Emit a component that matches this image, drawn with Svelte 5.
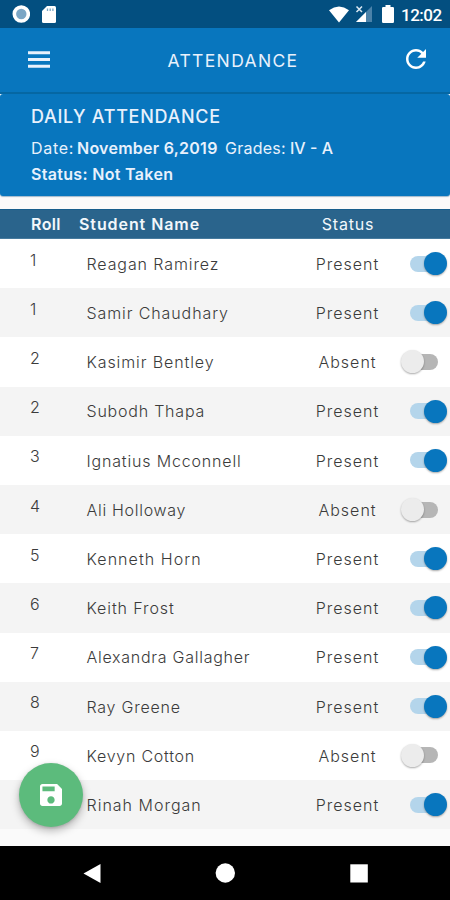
<script>
  const students = [
    { roll: 1, name: 'Reagan Ramirez', present: true, track: 0.9 },
    { roll: 1, name: 'Samir Chaudhary', present: true, track: 0.9 },
    { roll: 2, name: 'Kasimir Bentley', present: false, track: 0.9 },
    { roll: 2, name: 'Subodh Thapa', present: true, track: 0.78 },
    { roll: 3, name: 'Ignatius Mcconnell', present: true, track: 0.83 },
    { roll: 4, name: 'Ali Holloway', present: false, track: 0.7 },
    { roll: 5, name: 'Kenneth Horn', present: true, track: 1.07 },
    { roll: 6, name: 'Keith Frost', present: true, track: 0.9 },
    { roll: 7, name: 'Alexandra Gallagher', present: true, track: 0.73 },
    { roll: 8, name: 'Ray Greene', present: true, track: 0.76 },
    { roll: 9, name: 'Kevyn Cotton', present: false, track: 0.75 },
    { roll: 10, name: 'Rinah Morgan', present: true, track: 1 }
  ];
</script>

<div class="screen">
  <div class="statusbar">
    <svg class="ring" width="18" height="18" viewBox="0 0 18 18">
      <circle cx="9.300" cy="9" r="7" fill="#7ba6c5" stroke="#fff" stroke-width="3.600" />
    </svg>
    <svg class="sd" width="14" height="17" viewBox="0 0 14 17">
      <path d="M5 0H12.500Q14 0 14 1.500V15.500Q14 17 12.500 17H1.500Q0 17 0 15.500V5Z" fill="#fff" />
      <path d="M5.500 2.500V5M8.200 2.500V5M10.900 2.500V5" stroke="#7ba6c5" stroke-width="1.300" />
    </svg>
    <div class="spacer"></div>
    <svg width="20" height="17" viewBox="0 0 20 17">
      <path d="M0 4.200Q10-3.200 20 4.200L10 16.500Z" fill="#fff" />
    </svg>
    <svg class="signal" width="18" height="18" viewBox="0 0 18 18">
      <path d="M17 1V17H1Z" fill="#4b82a9" />
      <path d="M11 7V17H1Z" fill="#fff" />
      <path d="M1.500 1.500L7 7M7 1.500L1.500 7" stroke="#dce9f2" stroke-width="1.500" />
    </svg>
    <svg class="battery" width="12" height="18" viewBox="0 0 12 18">
      <path d="M3.500 0H8.500V2H10.800Q12 2 12 3.200V16.800Q12 18 10.800 18H1.200Q0 18 0 16.800V3.200Q0 2 1.200 2H3.500Z" fill="#fff" />
    </svg>
    <span class="clock">12:02</span>
  </div>

  <header class="appbar">
    <svg width="22" height="17" viewBox="0 0 22 17">
      <path d="M0 1.700H22M0 8.500H22M0 15.300H22" stroke="#e8f1fc" stroke-width="3" />
    </svg>
    <h1>ATTENDANCE</h1>
    <svg width="20" height="20" viewBox="4 4 16 16">
      <path fill="#fff" d="M17.650 6.350C16.200 4.900 14.210 4 12 4c-4.420 0-7.990 3.580-7.990 8s3.570 8 7.990 8c3.730 0 6.840-2.550 7.730-6h-2.080c-.82 2.330-3.040 4-5.650 4-3.310 0-6-2.690-6-6s2.690-6 6-6c1.660 0 3.140.69 4.220 1.780L13 11h7V4l-2.350 2.350z" />
    </svg>
  </header>

  <section class="summary">
    <h2>DAILY ATTENDANCE</h2>
    <p><span class="date-label">Date:</span><b class="date">November 6,2019</b><span class="grades">Grades:</span><b class="grade">IV - A</b></p>
    <p class="state"><b>Status: Not Taken</b></p>
  </section>

  <div class="table">
    <div class="thead">
      <span class="h-roll">Roll</span><span class="h-name">Student Name</span><span class="h-status">Status</span>
    </div>
    {#each students as s}
      <div class="row">
        <span class="roll">{s.roll}</span>
        <span class="name" style="letter-spacing: {s.track}px">{s.name}</span>
        <span class="status">{s.present ? 'Present' : 'Absent'}</span>
        <span class="toggle" class:on={s.present}><i></i></span>
      </div>
    {/each}
  </div>

  <button class="fab" aria-label="Save">
    <svg width="22" height="22" viewBox="3 3 18 18">
      <path fill="#fff" d="M17 3H5c-1.110 0-2 .9-2 2v14c0 1.100.89 2 2 2h14c1.100 0 2-.9 2-2V7l-4-4zm-5 16c-1.660 0-3-1.340-3-3s1.340-3 3-3 3 1.340 3 3-1.340 3-3 3zm3-10H5V5h10v4z" />
    </svg>
  </button>

  <nav>
    <svg width="450" height="54" viewBox="0 0 450 54">
      <path d="M83.500 27.500L100.500 18V37Z" fill="#fff" />
      <circle cx="225.300" cy="27" r="9.700" fill="#fff" />
      <rect x="350.300" y="18.300" width="17.500" height="18.200" fill="#fff" />
    </svg>
  </nav>
</div>

<style>
  :global(body) {
    margin: 0;
  }
  .screen {
    position: relative;
    width: 450px;
    height: 900px;
    display: flex;
    flex-direction: column;
    overflow: hidden;
    background: #fafafa;
    font-family: Inter, 'Noto Sans', sans-serif;
  }
  .screen * {
    box-sizing: border-box;
  }
  svg {
    display: block;
    flex: none;
  }
  span,
  b,
  h1,
  h2 {
    white-space: nowrap;
  }
  .statusbar {
    flex: none;
    height: 28px;
    display: flex;
    align-items: center;
    padding: 0 9px 0 12px;
    background: #034f80;
    color: #fff;
  }
  .sd {
    margin-left: 12px;
  }
  .spacer {
    flex: 1;
  }
  .signal {
    margin-left: 6px;
  }
  .battery {
    margin: 0 7px 0 9px;
  }
  .clock {
    width: 40px;
    font: 500 17px/28px Roboto, sans-serif;
    padding-top: 2px;
    letter-spacing: -0.500px;
  }
  .appbar {
    flex: none;
    height: 66px;
    display: flex;
    align-items: center;
    justify-content: space-between;
    padding: 0 24px 0 28px;
    background: #0876be;
    border-bottom: 2px solid #0567a3;
    color: #e8f1fc;
  }
  .appbar svg {
    margin-bottom: 2px;
  }
  h1 {
    margin: 1px 0 0 10px;
    font-size: 17.500px;
    line-height: 24px;
    font-weight: 400;
    letter-spacing: 1.350px;
  }
  .summary {
    flex: none;
    height: 102px;
    padding: 10px 30px 0 31px;
    background: #0876be;
    border-radius: 3px;
    box-shadow: 0 1px 1px #9fb9cc;
    color: #e8f1fc;
    font-size: 16px;
  }
  h2 {
    margin: 0;
    font-size: 18px;
    line-height: 26px;
    font-weight: 500;
    letter-spacing: 0.700px;
  }
  .summary p {
    margin: 5px 0 0;
    display: flex;
    line-height: 26px;
    height: 26px;
  }
  .summary .state {
    margin-top: 0;
    letter-spacing: 0.320px;
  }
  b {
    font-weight: 600;
  }
  .date-label {
    width: 46px;
    letter-spacing: 0.700px;
  }
  .date {
    width: 148px;
    letter-spacing: 0.260px;
  }
  .grades {
    width: 65px;
    letter-spacing: 0.260px;
  }
  .grade {
    font-weight: 500;
  }
  .table {
    flex: none;
    margin-top: 13px;
  }
  .thead {
    height: 30px;
    display: flex;
    padding-left: 31px;
    line-height: 29px;
    font-size: 16px;
    font-weight: 600;
    letter-spacing: 0.400px;
    color: #f2f7fb;
    background: #2a648c;
    border-top: 1px solid #175d8c;
    border-bottom: 1px solid #477b9e;
  }
  .h-roll {
    width: 48px;
  }
  .h-name {
    width: 209px;
    letter-spacing: 0.920px;
  }
  .h-status {
    width: 120px;
    text-align: center;
    font-weight: 400;
    letter-spacing: 0.800px;
  }
  .row {
    height: 49.200px;
    display: flex;
    align-items: center;
    background: #fff;
    color: #3b3b3b;
    font-size: 16px;
    line-height: 24px;
    font-weight: 300;
  }
  .row:nth-child(odd) {
    background: #f4f4f4;
  }
  .roll {
    width: 86.500px;
    padding: 0 0 8px 30px;
  }
  .name {
    width: 201px;
    padding-top: 0.500px;
  }
  .status {
    width: 120px;
    text-align: center;
    padding-top: 0.500px;
    letter-spacing: 1px;
  }
  .toggle {
    display: flex;
    align-items: center;
    width: 28px;
    height: 16px;
    margin-left: 2.500px;
    border-radius: 8px;
    background: #b6b6b6;
  }
  .toggle.on {
    justify-content: flex-end;
    background: #b4d5eb;
  }
  .toggle i {
    flex: none;
    width: 23px;
    height: 23px;
    margin: 0 0 0 -9px;
    border-radius: 50%;
    background: #ececec;
    box-shadow: 0 1px 2px #0005;
  }
  .toggle.on i {
    margin-right: -8.500px;
    background: #0876be;
  }
  .fab {
    position: absolute;
    left: 19px;
    top: 763px;
    width: 64px;
    height: 64px;
    padding: 0;
    display: grid;
    place-items: center;
    border: 0;
    border-radius: 50%;
    background: #5cbb7c;
    box-shadow: 0 4px 8px #0004, 0 1px 3px #0002;
  }
  nav {
    margin-top: auto;
    height: 54px;
    background: #000;
  }
</style>
